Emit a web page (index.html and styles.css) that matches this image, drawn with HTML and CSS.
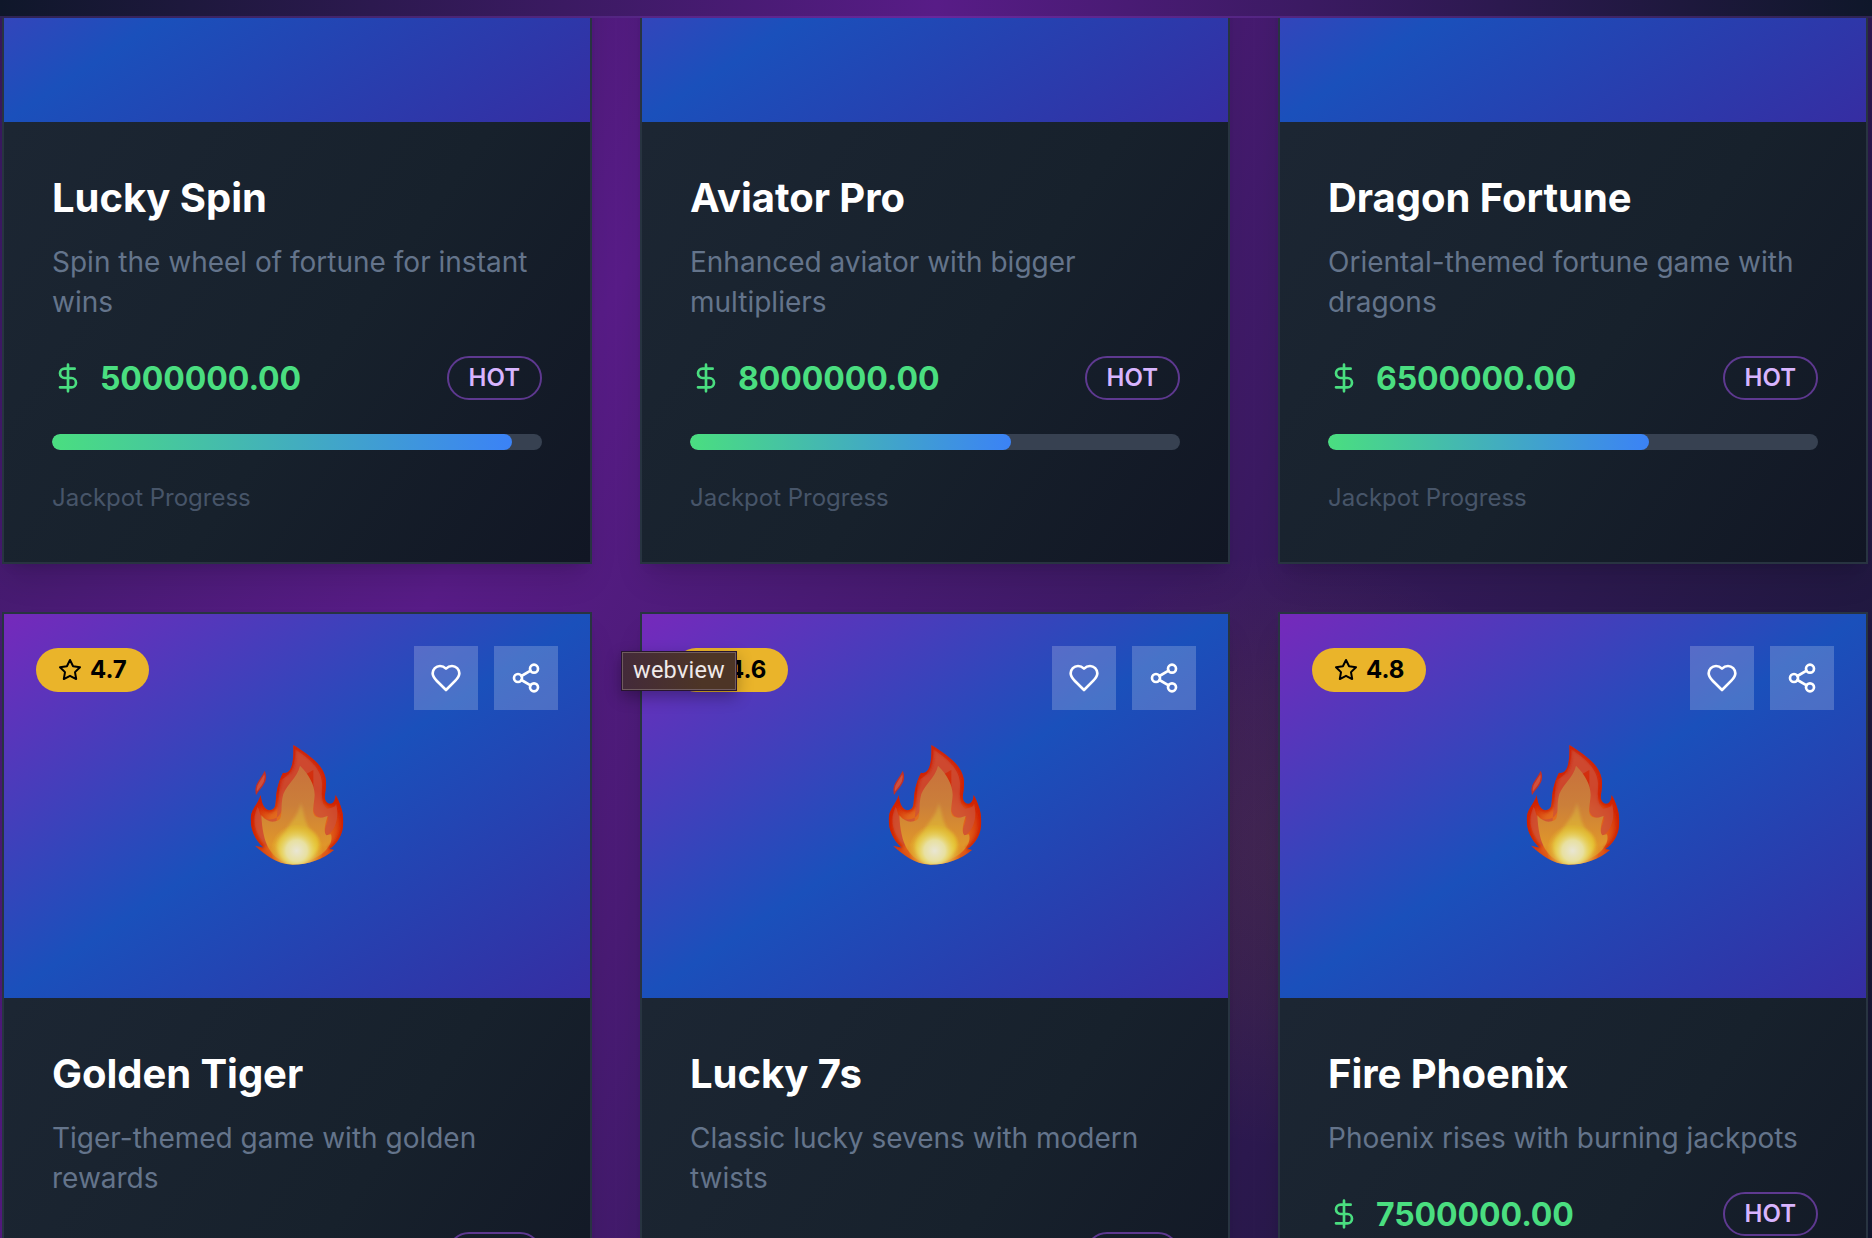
FILE: index.html
```html
<!DOCTYPE html>
<html lang="en">
<head>
<meta charset="utf-8">
<title>Jackpot Games</title>
<link rel="stylesheet" href="styles.css">
</head>
<body>
<svg class="defs" aria-hidden="true">
  <defs>
    <symbol id="dollar" viewBox="0 0 24 24"><path d="M12 2v20M17 5H9.5a3.5 3.5 0 0 0 0 7h5a3.5 3.5 0 0 1 0 7H6"/></symbol>
    <symbol id="star" viewBox="0 0 24 24"><path d="M12 2l3.09 6.26L22 9.27l-5 4.87 1.18 6.88L12 17.77l-6.18 3.25L7 14.14 2 9.27l6.91-1.01z"/></symbol>
    <symbol id="heart" viewBox="0 0 24 24"><path d="M19 14c1.49-1.46 3-3.21 3-5.5A5.5 5.5 0 0 0 16.5 3c-1.76 0-3 .5-4.5 2-1.5-1.5-2.74-2-4.5-2A5.5 5.5 0 0 0 2 8.500c0 2.300 1.500 4.050 3 5.500l7 7Z"/></symbol>
    <symbol id="share" viewBox="0 0 24 24"><circle cx="18" cy="5" r="3"/><circle cx="6" cy="12" r="3"/><circle cx="18" cy="19" r="3"/><path d="M8.590 13.510l6.830 3.980M15.410 6.510l-6.820 3.980"/></symbol>
    <radialGradient id="f-outer" gradientUnits="userSpaceOnUse" cx="232" cy="340" r="270">
      <stop offset="0" stop-color="#e89020"/><stop offset=".35" stop-color="#e0641c"/><stop offset=".52" stop-color="#d42a04"/><stop offset="1" stop-color="#cf3a24"/>
    </radialGradient>
    <linearGradient id="f-mid" gradientUnits="userSpaceOnUse" x1="0" y1="135" x2="0" y2="434">
      <stop offset="0" stop-color="#c8703c"/><stop offset=".4" stop-color="#cb7f3a"/><stop offset=".8" stop-color="#e0962a"/><stop offset="1" stop-color="#dc7c1e"/>
    </linearGradient>
    <linearGradient id="f-in" gradientUnits="userSpaceOnUse" x1="0" y1="245" x2="0" y2="434">
      <stop offset="0" stop-color="#cf9440"/><stop offset=".5" stop-color="#dfb030"/><stop offset="1" stop-color="#ecc81c"/>
    </linearGradient>
    <radialGradient id="f-core" gradientUnits="userSpaceOnUse" cx="230" cy="392" r="80">
      <stop offset="0" stop-color="#e9e6d4"/><stop offset=".4" stop-color="#e8e0a0"/><stop offset="1" stop-color="#e8d020" stop-opacity="0"/>
    </radialGradient>
    <clipPath id="f-clip"><path d="M220 75C265 103 318 138 318 188C318 218 311 230 317 243C330 260 346 250 347 225C360 248 370 275 370 305C370 345 350 372 328 387L342 390C310 418 265 434 218 434C165 430 140 407 105 377L131 383C105 360 92 330 92 298C92 266 116 252 122 225C125 258 137 273 153 270C180 262 154 228 189 158C203 162 223 155 220 75Z"/></clipPath>
    <filter id="f-soft" x="-20%" y="-20%" width="140%" height="140%"><feGaussianBlur stdDeviation="5"/></filter>
    <symbol id="flame" viewBox="-9 18 480 480">
      <path fill="#d0503c" stroke="#c03028" stroke-width="4" d="M134 157C144 187 120 203 109 220C103 195 122 180 134 157Z"/>
      <g clip-path="url(#f-clip)">
        <rect x="80" y="60" width="300" height="380" fill="url(#f-outer)"/>
        <path fill="#cc5038" opacity=".75" d="M226 88C262 112 304 145 306 188C307 222 300 248 322 266C345 262 347 258 348 250C358 285 350 330 320 347C305 335 326 305 325 290C300 300 282 288 280 270V150C220 180 190 220 188 262C180 300 155 303 128 295C118 286 118 262 112 262C90 310 112 350 140 380L170 300L180 180C205 170 225 150 226 88Z"/>
        <path fill="url(#f-mid)" d="M240 137C268 165 284 195 284 225C282 258 272 282 289 291C306 297 320 288 323 288C316 310 309 335 319 346L333 343C342 370 315 420 218 434C150 420 128 370 124 286C142 307 158 309 177 300C190 290 180 255 190 222C202 192 232 172 240 137Z"/>
        <path fill="url(#f-in)" filter="url(#f-soft)" d="M242 248C256 285 251 310 276 333C295 345 302 370 292 390C275 420 245 434 220 434C195 432 172 405 172 378C173 354 189 348 202 325C217 299 236 285 242 248Z"/>
        <ellipse cx="231" cy="390" rx="78" ry="76" fill="url(#f-core)"/>
        <path fill="none" stroke="#cf1c02" stroke-width="13" opacity=".8" filter="url(#f-soft)" d="M220 75C265 103 318 138 318 188C318 218 311 230 317 243C330 260 346 250 347 225C360 248 370 275 370 305C370 345 350 372 328 387M131 383C105 360 92 330 92 298C92 266 116 252 122 225C125 258 137 273 153 270C180 262 154 228 189 158C203 162 223 155 220 75"/>
      </g>
    </symbol>
  </defs>
</svg>

<header class="topbar"></header>
<main class="viewport">
  <section class="grid">
    <article class="card">
      <div class="art"></div>
      <div class="body">
        <h3>Lucky Spin</h3>
        <p class="desc">Spin the wheel of fortune for instant wins</p>
        <div class="row"><span class="price"><svg class="icon"><use href="#dollar"/></svg><b>5000000.00</b></span><span class="tag">HOT</span></div>
        <div class="track"><div class="fill" style="width:93.8%"></div></div>
        <p class="note">Jackpot Progress</p>
      </div>
    </article>
    <article class="card">
      <div class="art"></div>
      <div class="body">
        <h3>Aviator Pro</h3>
        <p class="desc">Enhanced aviator with bigger multipliers</p>
        <div class="row"><span class="price"><svg class="icon"><use href="#dollar"/></svg><b>8000000.00</b></span><span class="tag">HOT</span></div>
        <div class="track"><div class="fill" style="width:65.5%"></div></div>
        <p class="note">Jackpot Progress</p>
      </div>
    </article>
    <article class="card">
      <div class="art"></div>
      <div class="body">
        <h3>Dragon Fortune</h3>
        <p class="desc">Oriental-themed fortune game with dragons</p>
        <div class="row"><span class="price"><svg class="icon"><use href="#dollar"/></svg><b>6500000.00</b></span><span class="tag">HOT</span></div>
        <div class="track"><div class="fill" style="width:65.5%"></div></div>
        <p class="note">Jackpot Progress</p>
      </div>
    </article>

    <article class="card">
      <div class="art">
        <svg class="flame"><use href="#flame"/></svg>
        <span class="rating"><svg class="icon"><use href="#star"/></svg><b>4.7</b></span>
        <div class="actions"><span class="action"><svg class="icon"><use href="#heart"/></svg></span><span class="action"><svg class="icon"><use href="#share"/></svg></span></div>
      </div>
      <div class="body">
        <h3>Golden Tiger</h3>
        <p class="desc">Tiger-themed game with golden rewards</p>
        <div class="row"><span class="price"></span><span class="tag tag-empty"></span></div>
      </div>
    </article>
    <article class="card">
      <div class="art">
        <svg class="flame"><use href="#flame"/></svg>
        <span class="rating"><svg class="icon"><use href="#star"/></svg><b>4.6</b></span>
        <div class="actions"><span class="action"><svg class="icon"><use href="#heart"/></svg></span><span class="action"><svg class="icon"><use href="#share"/></svg></span></div>
      </div>
      <div class="body">
        <h3>Lucky 7s</h3>
        <p class="desc">Classic lucky sevens with modern twists</p>
        <div class="row"><span class="price"></span><span class="tag tag-empty"></span></div>
      </div>
    </article>
    <article class="card">
      <div class="art">
        <svg class="flame"><use href="#flame"/></svg>
        <span class="rating"><svg class="icon"><use href="#star"/></svg><b>4.8</b></span>
        <div class="actions"><span class="action"><svg class="icon"><use href="#heart"/></svg></span><span class="action"><svg class="icon"><use href="#share"/></svg></span></div>
      </div>
      <div class="body">
        <h3>Fire Phoenix</h3>
        <p class="desc">Phoenix rises with burning jackpots</p>
        <div class="row"><span class="price"><svg class="icon"><use href="#dollar"/></svg><b>7500000.00</b></span><span class="tag">HOT</span></div>
      </div>
    </article>
  </section>
</main>
<div class="tooltip">webview</div>
</body>
</html>
```
FILE: styles.css
```css
* { box-sizing: border-box; }
body {
  margin: 0;
  height: 1238px;
  display: flex;
  flex-direction: column;
  position: relative;
  overflow: hidden;
  font-family: Inter, "Liberation Sans", sans-serif;
  background:
    radial-gradient(circle 300px at 1290px 850px, rgba(234, 179, 8, .08), rgba(234, 179, 8, .05) 50%, transparent),
    linear-gradient(120.8deg, #0f172a -40%, #581c87 30.2%, #0f172a 103%);
}
h3, p { margin: 0; }
.defs { position: absolute; width: 0; height: 0; }
.topbar {
  flex: none;
  height: 18px;
  border-bottom: 2px solid rgba(168, 85, 247, .2);
  background: linear-gradient(to right, #0f172a, #581c87 50%, #0f172a);
}
.viewport { flex: 1; min-height: 0; overflow: hidden; }
.grid {
  margin: -282px 0 0 2px;
  width: 1866px;
  display: grid;
  grid-template-columns: repeat(3, 1fr);
  grid-auto-rows: 828px;
  gap: 48px;
}
.card {
  min-width: 0;
  border: 2px solid #283441;
  background: linear-gradient(to bottom right, #1f2937, #17212c 65%, #111624);
  box-shadow: 0 20px 30px -6px rgba(0, 0, 0, .12), 0 8px 12px -8px rgba(0, 0, 0, .12);
}
.art {
  height: 384px;
  position: relative;
  display: flex;
  align-items: center;
  justify-content: center;
  background: linear-gradient(to bottom right, #7629bb, #1a50bb 50%, #362da2);
}
.flame { width: 160px; height: 160px; }
.icon {
  flex: none;
  width: 32px;
  height: 32px;
  fill: none;
  stroke: currentColor;
  stroke-width: 2;
  stroke-linecap: round;
  stroke-linejoin: round;
}
.rating {
  position: absolute;
  top: 34px;
  left: 32px;
  height: 44px;
  padding: 0 22px;
  display: flex;
  align-items: center;
  gap: 8px;
  border-radius: 22px;
  background: #eab42a;
  color: #000;
  font-size: 24px;
}
.rating b { padding-bottom: 2px; font-weight: 650; }
.rating .icon { width: 24px; height: 24px; }
.actions {
  position: absolute;
  top: 32px;
  right: 32px;
  display: flex;
  gap: 16px;
}
.action {
  width: 64px;
  height: 64px;
  display: flex;
  align-items: center;
  justify-content: center;
  background: rgba(255, 255, 255, .2);
  color: #fff;
}
.body { padding: 48px; }
h3 {
  font-size: 40px;
  line-height: 56px;
  font-weight: 700;
  letter-spacing: -.05px;
  color: #fff;
}
.desc {
  margin-top: 16px;
  font-size: 28px;
  line-height: 40px;
  color: #64748b;
}
.row {
  margin-top: 32px;
  height: 48px;
  display: flex;
  align-items: center;
  justify-content: space-between;
}
.price {
  display: flex;
  align-items: center;
  gap: 16px;
  color: #4ade80;
  font-size: 32px;
  line-height: 46px;
  letter-spacing: -.08px;
}
.price b { padding-top: 2px; font-weight: 700; }
.tag {
  height: 44px;
  padding: 4px 20px;
  border: 2px solid rgba(168, 85, 247, .5);
  border-radius: 22px;
  color: #d8b4fe;
  font-size: 24px;
  line-height: 32px;
  font-weight: 600;
}
.tag-empty { width: 95px; }
.track {
  margin-top: 32px;
  height: 16px;
  border-radius: 8px;
  overflow: hidden;
  background: #374151;
}
.fill {
  height: 16px;
  border-radius: 8px;
  background: linear-gradient(to right, #4ade80, #3b82f6);
}
.note {
  margin-top: 32px;
  font-size: 24px;
  line-height: 32px;
  color: #475569;
}
.tooltip {
  position: absolute;
  left: 621px;
  top: 651px;
  width: 116px;
  height: 40px;
  border: 1px solid #28152f;
  background: linear-gradient(to right, #432a3a, #4d3526 70%);
  box-shadow: inset 0 0 0 1px #705c5e, 0 6px 16px rgba(0, 0, 0, .3);
  color: #f0eaea;
  font-family: Roboto, Inter, sans-serif;
  font-size: 23.500px;
  line-height: 37px;
  letter-spacing: .2px;
  text-align: center;
}
```
